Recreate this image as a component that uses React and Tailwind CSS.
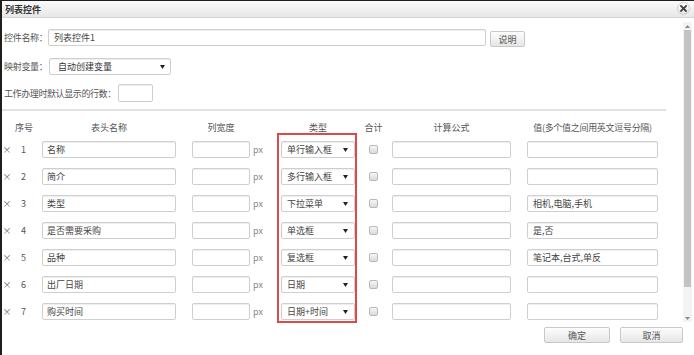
import React from 'react';

const rows = [
  { n: 1, name: '名称', type: '单行输入框', val: '' },
  { n: 2, name: '简介', type: '多行输入框', val: '' },
  { n: 3, name: '类型', type: '下拉菜单', val: '相机,电脑,手机' },
  { n: 4, name: '是否需要采购', type: '单选框', val: '是,否' },
  { n: 5, name: '品种', type: '复选框', val: '笔记本,台式,单反' },
  { n: 6, name: '出厂日期', type: '日期', val: '' },
  { n: 7, name: '购买时间', type: '日期+时间', val: '' },
];

const inputCls =
  'shrink-0 h-[17px] border border-[#cfcfcf] rounded-[2px] bg-white shadow-[inset_0_1px_1px_rgba(0,0,0,0.07)] flex items-center text-[#444] whitespace-nowrap';

function Arrow() {
  return (
    <svg width="5" height="4" viewBox="0 0 5 4" className="block">
      <path d="M0 0 L5 0 L2.5 4 Z" fill="#222" />
    </svg>
  );
}

function Btn({ children, w }) {
  return (
    <div
      className={`${w} shrink-0 h-[16px] border border-[#c8c8c8] rounded-[2px] bg-linear-to-b from-[#fdfdfd] to-[#e6e6e6] flex items-center justify-center text-[#555]`}
    >
      {children}
    </div>
  );
}

export default function App() {
  return (
    <div
      className="w-[694px] h-[355px] overflow-hidden bg-white border-l-2 border-t border-[#1e1e1e] relative text-[9px] leading-none text-[#555]"
      style={{ fontFamily: '"Noto Sans CJK SC", "Noto Sans", sans-serif' }}
    >
      {/* title bar */}
      <div className="h-[17px] flex items-center pl-[3px] bg-linear-to-b from-[#fbfbfb] to-[#e7e7e7] border-b border-[#d6d6d6] relative">
        <span className="font-bold text-[#333] text-[9px]">列表控件</span>
        <div className="absolute right-[4px] top-[1px] w-[13px] h-[13px] rounded-full border border-[#cfcfcf] bg-linear-to-b from-[#ffffff] to-[#e4e4e4] flex items-center justify-center">
          <svg width="7" height="7" viewBox="0 0 7 7">
            <path d="M1 1 L6 6 M6 1 L1 6" stroke="#444" strokeWidth="1.8" strokeLinecap="square" />
          </svg>
        </div>
      </div>

      <div className="flex">
        {/* main */}
        <div className="w-[681px] shrink-0 flex flex-col">
          {/* row 1 */}
          <div className="flex items-start mt-[11px]">
            <div className="w-[46px] shrink-0 h-[17px] flex items-center pl-[2px] whitespace-nowrap tracking-[-0.3px]">控件名称：</div>
            <div className={`${inputCls} w-[438px] pl-[5px]`}>列表控件1</div>
            <div className="ml-[4px] mt-[2px]">
              <Btn w="w-[35px]">说明</Btn>
            </div>
          </div>
          {/* row 2 */}
          <div className="flex items-start mt-[11px]">
            <div className="w-[47px] shrink-0 h-[17px] flex items-center pl-[2px] whitespace-nowrap tracking-[-0.3px]">映射变量：</div>
            <div className={`${inputCls} w-[122px] pl-[8px] pr-[5px] justify-between`}>
              <span className="text-[#333]">自动创建变量</span>
              <Arrow />
            </div>
          </div>
          {/* row 3 */}
          <div className="flex items-start mt-[9px]">
            <div className="w-[116px] shrink-0 h-[18px] flex items-center pl-[2px] whitespace-nowrap tracking-[-0.4px]">工作办理时默认显示的行数：</div>
            <div className={`${inputCls} w-[35px] h-[18px]`}></div>
          </div>
          {/* divider */}
          <div className="mt-[7px] w-[664px] h-[2px] bg-[#e2e2e2]"></div>

          {/* table header */}
          <div className="flex items-center h-[14px] mt-[9px] whitespace-nowrap">
            <div className="w-[40px] shrink-0 pl-[13px]">序号</div>
            <div className="w-[134px] shrink-0 text-center">表头名称</div>
            <div className="w-[16px] shrink-0"></div>
            <div className="w-[58px] shrink-0 text-center">列宽度</div>
            <div className="w-[31px] shrink-0"></div>
            <div className="w-[74px] shrink-0 text-center">类型</div>
            <div className="w-[37px] shrink-0 text-center">合计</div>
            <div className="w-[119px] shrink-0 text-center">计算公式</div>
            <div className="w-[16px] shrink-0"></div>
            <div className="w-[131px] shrink-0 text-center tracking-[-0.3px]">值(多个值之间用英文逗号分隔)</div>
          </div>

          {/* table rows */}
          <div className="flex flex-col gap-[10px] mt-[7px]">
            {rows.map((r) => (
              <div key={r.n} className="flex items-center h-[17px]">
                <div className="w-[10px] shrink-0 text-center text-[#666]">×</div>
                <div className="w-[30px] shrink-0 pl-[9px] text-[#555]">{r.n}</div>
                <div className={`${inputCls} w-[134px] pl-[4px]`}>{r.name}</div>
                <div className="w-[16px] shrink-0"></div>
                <div className={`${inputCls} w-[58px]`}></div>
                <div className="w-[31px] shrink-0 pl-[3px] text-[#888]">px</div>
                <div className={`${inputCls} w-[74px] pl-[5px] pr-[6px] justify-between`}>
                  <span>{r.type}</span>
                  <Arrow />
                </div>
                <div className="w-[37px] shrink-0 flex items-center pl-[14px]">
                  <div className="w-[9px] h-[9px] border border-[#b9b9b9] rounded-[2px] bg-linear-to-b from-[#f6f6f6] to-[#dadada]"></div>
                </div>
                <div className={`${inputCls} w-[119px]`}></div>
                <div className="w-[16px] shrink-0"></div>
                <div className={`${inputCls} w-[131px] pl-[5px]`}>{r.val}</div>
              </div>
            ))}
          </div>

          {/* buttons */}
          <div className="flex justify-end gap-[10px] mt-[7px]">
            <Btn w="w-[66px]">确定</Btn>
            <Btn w="w-[63px]">取消</Btn>
          </div>
        </div>

        {/* scrollbar */}
        <div className="w-[9px] shrink-0 mt-[4px] h-[300px] bg-[#f3f3f3] flex flex-col items-center">
          <div className="h-[8px] flex items-center justify-center">
            <svg width="5" height="3" viewBox="0 0 5 3">
              <path d="M0 3 L5 3 L2.5 0 Z" fill="#888" />
            </svg>
          </div>
          <div className="w-[7px] h-[257px] bg-[#c3c3c3]"></div>
          <div className="flex-1"></div>
          <div className="h-[8px] flex items-center justify-center">
            <svg width="5" height="3" viewBox="0 0 5 3">
              <path d="M0 0 L5 0 L2.5 3 Z" fill="#888" />
            </svg>
          </div>
        </div>
      </div>

      {/* highlight box */}
      <div className="absolute left-[275px] top-[132px] w-[80px] h-[190px] border-2 border-[#dc4a4a] pointer-events-none"></div>
    </div>
  );
}
